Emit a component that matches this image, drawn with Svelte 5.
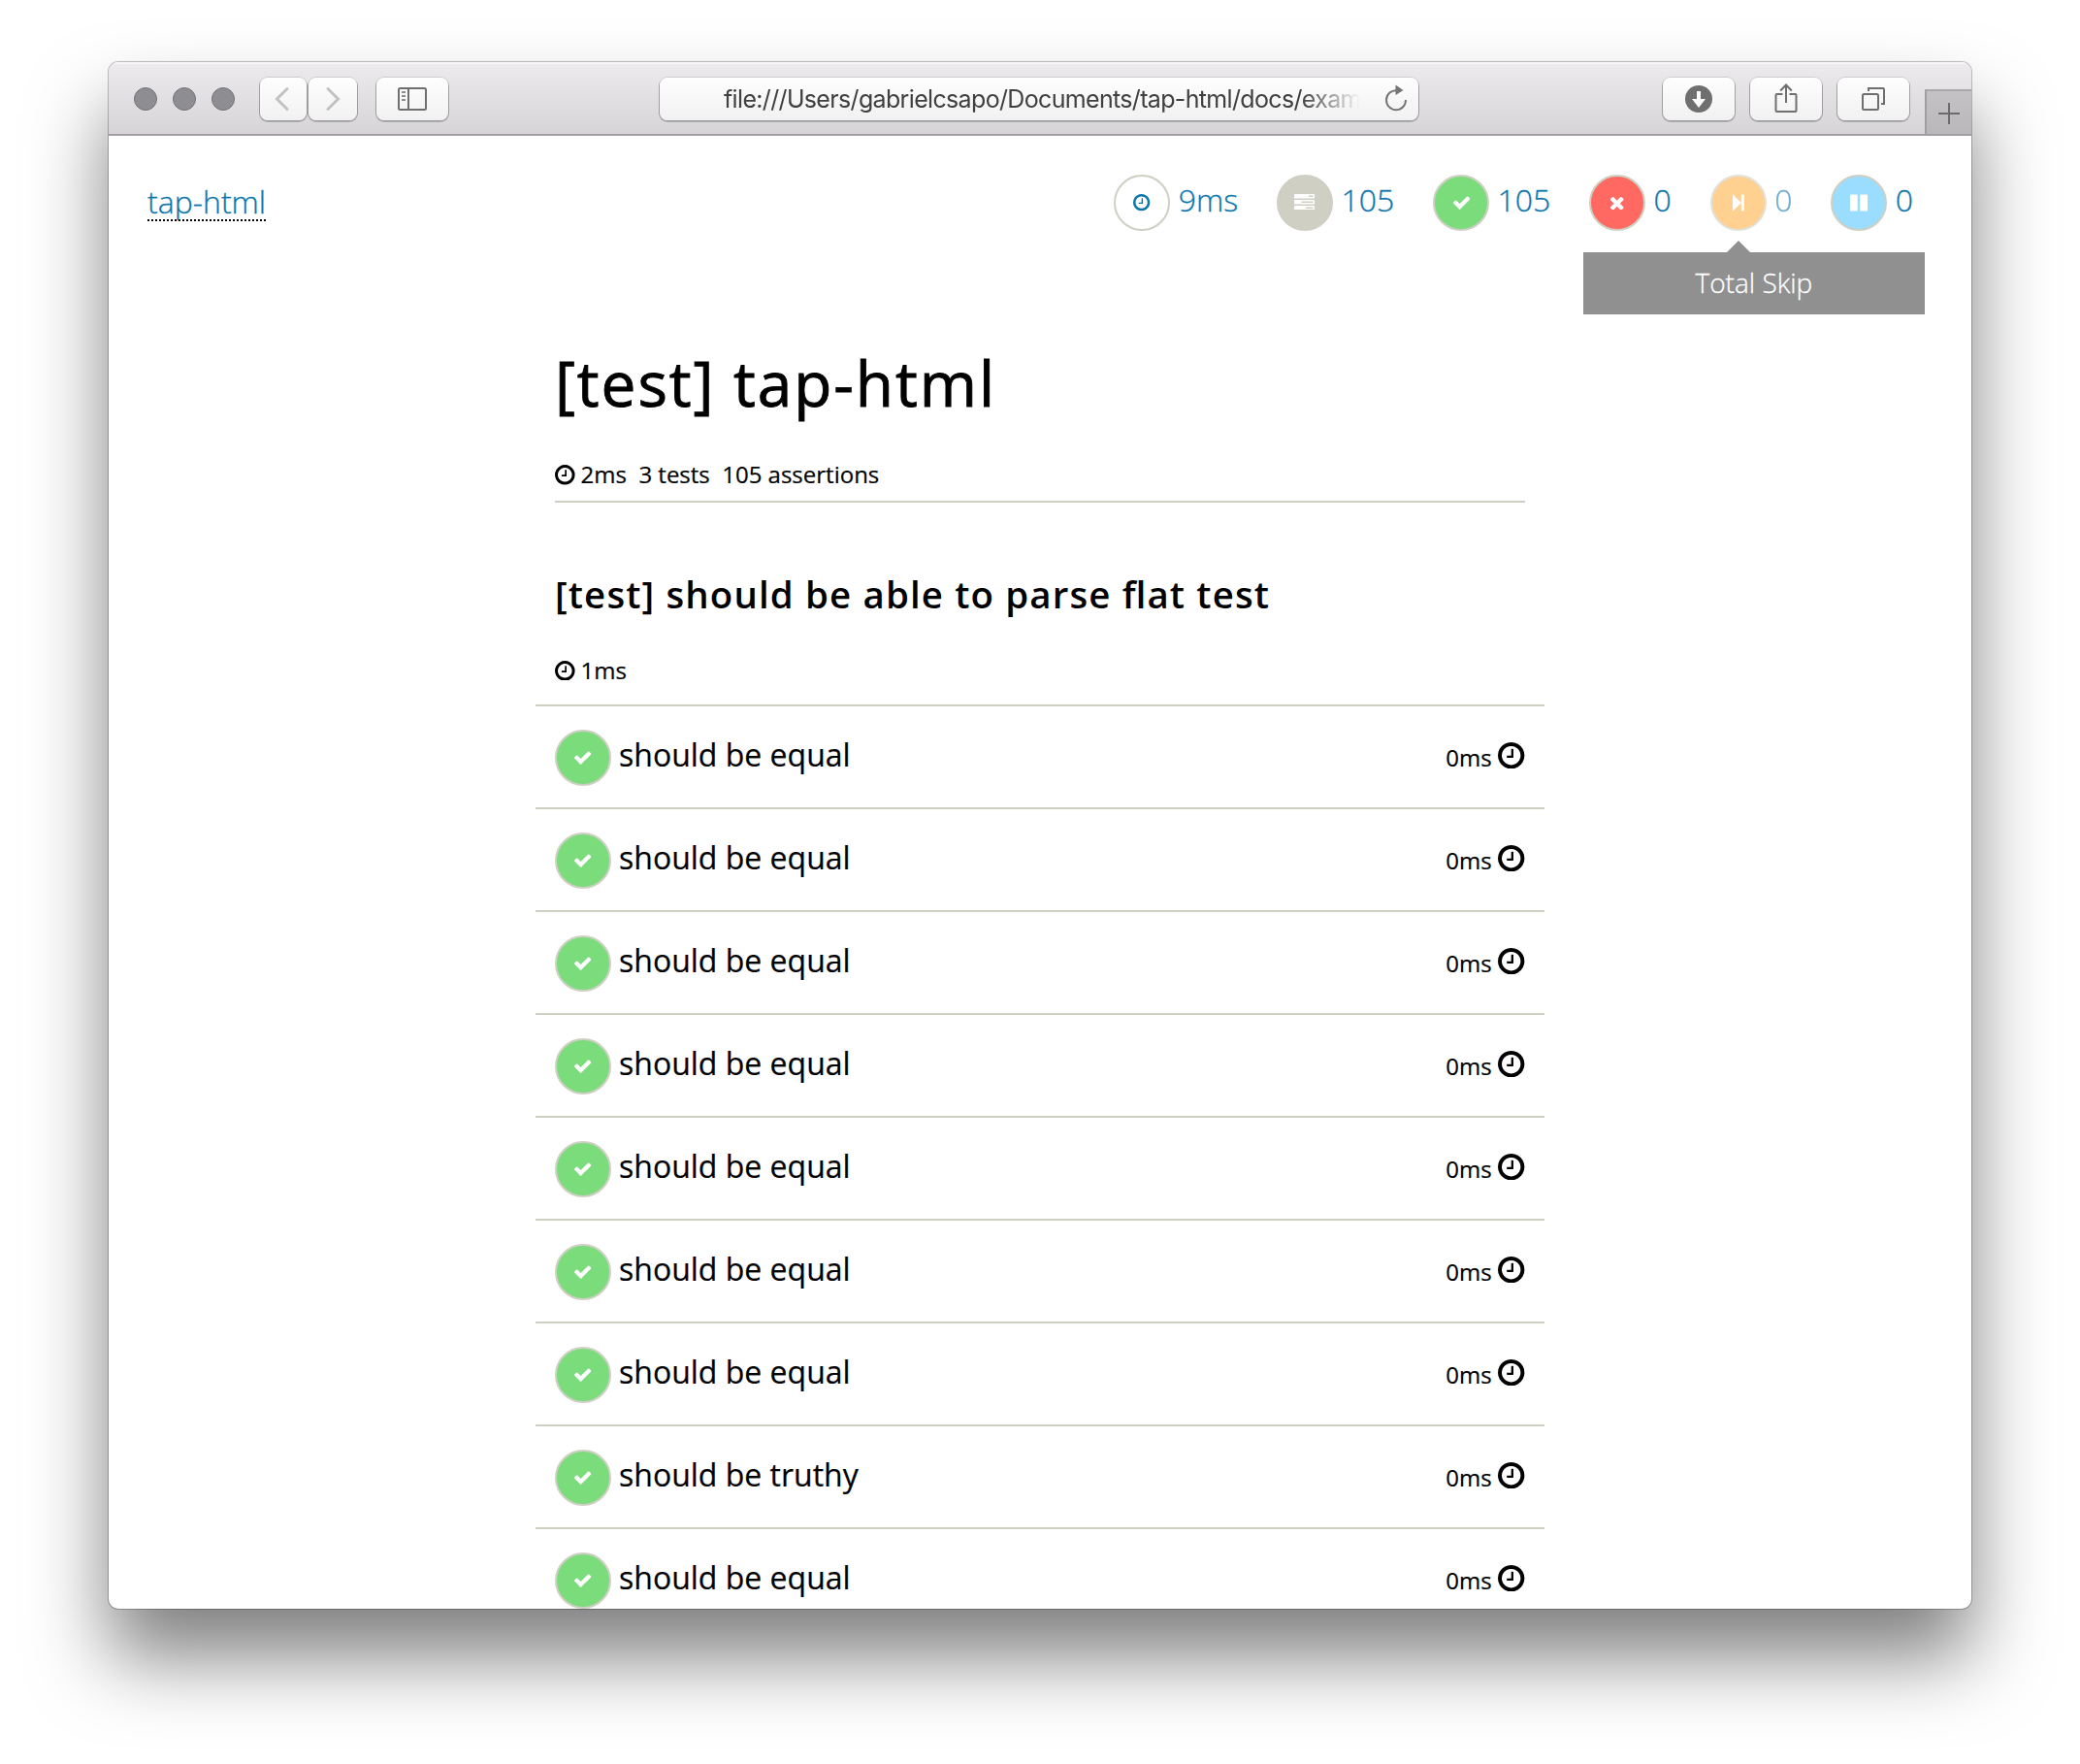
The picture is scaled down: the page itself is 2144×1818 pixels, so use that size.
<script>
  const assertions = [
    'should be equal',
    'should be equal',
    'should be equal',
    'should be equal',
    'should be equal',
    'should be equal',
    'should be equal',
    'should be truthy',
    'should be equal'
  ];

  const totals = [
    { kind: 'time', label: '9ms' },
    { kind: 'total', label: '105' },
    { kind: 'pass', label: '105' },
    { kind: 'fail', label: '0' },
    { kind: 'skip', label: '0', tip: 'Total Skip' },
    { kind: 'todo', label: '0' }
  ];
</script>

{#snippet clock(cls)}
  <svg class={cls} viewBox="0 128 1536 1536" fill="currentColor">
    <path d="M896 544v448q0 14-9 23t-23 9h-320q-14 0-23-9t-9-23v-64q0-14 9-23t23-9h224v-352q0-14 9-23t23-9h64q14 0 23 9t9 23zm416 352q0-148-73-273t-198-198-273-73-273 73-198 198-73 273 73 273 198 198 273 73 273-73 198-198 73-273zm224 0q0 209-103 385.5t-279.5 279.5-385.5 103-385.5-103-279.5-279.5-103-385.5 103-385.5 279.5-279.5 385.5-103 385.5 103 279.5 279.5 103 385.5z" />
  </svg>
{/snippet}

{#snippet check()}
  <svg class="check" viewBox="121 294 1550 1228" fill="currentColor">
    <path d="M1671 566q0 40-28 68l-724 724-136 136q-28 28-68 28t-68-28l-136-136-362-362q-28-28-28-68t28-68l136-136q28-28 68-28t68 28l294 295 656-657q28-28 68-28t68 28l136 136q28 28 28 68z" />
  </svg>
{/snippet}

<div class="desktop">
  <div class="window">
    <div class="toolbar">
      <div class="lights"><i></i><i></i><i></i></div>
      <div class="nav">
        <span class="btn back"><svg width="16" height="26" viewBox="0 0 16 26"><path d="M13 2.5 2.5 13 13 23.5" /></svg></span>
        <span class="btn fwd"><svg width="16" height="26" viewBox="0 0 16 26"><path d="M3 2.5 13.5 13 3 23.5" /></svg></span>
      </div>
      <span class="btn side">
        <svg width="30" height="24" viewBox="0 0 30 24" fill="none" stroke="#6f6f6f">
          <rect x="1" y="1" width="28" height="22" rx="1.5" stroke-width="2" />
          <path d="M11 1v22" stroke-width="2" />
          <path d="M4 5h4M4 9h4M4 13h4" stroke-width="2" stroke="#8c8c8c" />
        </svg>
      </span>
      <div class="address">
        <span class="url">file:///Users/gabrielcsapo/Documents/tap-html/docs/exam</span>
        <svg class="reload" width="24" height="28" viewBox="0 0 24 28">
          <path d="M12.5 6.2A10 10 0 1 0 22 16" fill="none" stroke="#757575" stroke-width="2" />
          <path d="M11.5 0.5V11L19.5 6Z" fill="#757575" />
        </svg>
      </div>
      <div class="actions">
        <span class="btn">
          <svg width="28" height="28" viewBox="0 0 28 28"><circle cx="14" cy="14" r="14" fill="#6f6f6f" /><path d="M12 6h4v8h5l-7 9-7-9h5z" fill="#fcfcfc" /></svg>
        </span>
        <span class="btn share">
          <svg width="24" height="30" viewBox="0 0 24 30" fill="none" stroke="#6f6f6f" stroke-width="2">
            <path d="M8.5 11H2.5Q1.5 11 1.5 12V28Q1.5 29 2.5 29H21.5Q22.5 29 22.5 28V12Q22.5 11 21.5 11H15.500M12 20V1.500M6.200 7.500 12 1.500 17.800 7.500" />
          </svg>
        </span>
        <span class="btn">
          <svg width="24" height="24" viewBox="0 0 24 24" fill="none" stroke="#6f6f6f" stroke-width="2">
            <rect x="1" y="7" width="16" height="16" rx="1.500" />
            <path d="M7 4V1H22Q23 1 23 2V17H20" />
          </svg>
        </span>
      </div>
      <div class="newtab">
        <svg width="22" height="22" viewBox="0 0 22 22" stroke="#6b6b6b" stroke-width="2"><path d="M11 0v22M0 11h22" /></svg>
      </div>
    </div>

    <div class="page">
      <header>
        <a class="brand" href="#top">tap-html</a>
        <nav>
          {#each totals as t}
            <div class="stat {t.kind}">
              <span class="badge {t.kind}">
                {#if t.kind === 'time'}
                  {@render clock('tiny')}
                {:else if t.kind === 'total'}
                  <svg width="21" height="16.5" viewBox="0 128 1792 1408" fill="currentColor">
                    <path d="M1024 1408h640v-128h-640v128zm-384-512h1024v-128h-1024v128zm640-512h384v-128h-384v128zm512 832v256q0 26-19 45t-45 19h-1664q-26 0-45-19t-19-45v-256q0-26 19-45t45-19h1664q26 0 45 19t19 45zm0-512v256q0 26-19 45t-45 19h-1664q-26 0-45-19t-19-45v-256q0-26 19-45t45-19h1664q26 0 45 19t19 45zm0-512v256q0 26-19 45t-45 19h-1664q-26 0-45-19t-19-45v-256q0-26 19-45t45-19h1664q26 0 45 19t19 45z" />
                  </svg>
                {:else if t.kind === 'pass'}
                  {@render check()}
                {:else if t.kind === 'fail'}
                  <svg class="cross" width="13.500" height="13.500" viewBox="302 366 1188 1188" fill="currentColor">
                    <path d="M1490 1322q0 40-28 68l-136 136q-28 28-68 28t-68-28l-294-294-294 294q-28 28-68 28t-68-28l-136-136q-28-28-28-68t28-68l294-294-294-294q-28-28-28-68t28-68l136-136q28-28 68-28t68 28l294 294 294-294q28-28 68-28t68 28l136 136q28 28 28 68t-28 68l-294 294 294 294q28 28 28 68z" />
                  </svg>
                {:else if t.kind === 'skip'}
                  <svg width="12" height="18" viewBox="0 0 12 18" fill="currentColor"><path d="M0 .3 8.800 9V1Q8.800.4 9.400.4H11Q11.700.4 11.700 1V17Q11.700 17.600 11 17.600H9.400Q8.800 17.600 8.800 17V9L0 17.700Z" /></svg>
                {:else}
                  <svg width="18" height="18" viewBox="0 0 18 18" fill="currentColor"><rect x="0" y=".4" width="7.700" height="17.200" rx=".7" /><rect x="10.300" y=".4" width="7.700" height="17.200" rx=".7" /></svg>
                {/if}
              </span>
              <span class="num">{t.label}</span>
              {#if t.tip}<div class="tip">{t.tip}</div>{/if}
            </div>
          {/each}
        </nav>
      </header>

      <main>
        <h1>[test] tap-html</h1>
        <div class="meta ruled">{@render clock('small')}<span>2ms</span><span>3 tests</span><span>105 assertions</span></div>
        <h2>[test] should be able to parse flat test</h2>
        <div class="meta">{@render clock('small')}<span>1ms</span></div>
        <ul>
          {#each assertions as name}
            <li>
              <span class="badge pass">{@render check()}</span>
              <span class="name">{name}</span>
              <span class="took">0ms</span>
              {@render clock('large')}
            </li>
          {/each}
        </ul>
      </main>
    </div>
  </div>
</div>

<style>
  :global(body) {
    background: #fff;
  }
  .desktop {
    box-sizing: border-box;
    width: 2144px;
    height: 1818px;
    padding: 64px 112px 160px;
    overflow: hidden;
    font-family: 'Open Sans', 'Noto Sans', sans-serif;
    color: #000;
  }
  .window {
    width: 1920px;
    height: 1594px;
    border-radius: 10px;
    background: #fff;
    box-shadow:
      0 0 0 1px rgba(0, 0, 0, 0.24),
      0 50px 80px rgba(0, 0, 0, 0.5);
    display: flex;
    flex-direction: column;
    overflow: hidden;
  }
  svg {
    display: block;
    flex: none;
  }

  .toolbar {
    box-sizing: border-box;
    flex: none;
    height: 76px;
    border-bottom: 2px solid #a19fa3;
    background: linear-gradient(#edebee, #d6d4d7);
    box-shadow: inset 0 2px 0 #f6f5f6;
    display: flex;
    padding-left: 26px;
  }
  .lights {
    display: flex;
    gap: 16px;
    align-items: center;
    height: 76px;
    width: 130px;
  }
  .lights i {
    box-sizing: border-box;
    width: 24px;
    height: 24px;
    border-radius: 50%;
    background: #8e8d91;
    border: 1px solid #737276;
  }
  .btn {
    box-sizing: border-box;
    width: 74px;
    height: 44px;
    border-radius: 8px;
    background: linear-gradient(#fefefe, #f1f1f1);
    box-shadow:
      0 0 0 1px rgba(0, 0, 0, 0.11),
      0 1px 0 1px rgba(0, 0, 0, 0.2);
    display: flex;
    align-items: center;
    justify-content: center;
  }
  .nav {
    display: flex;
    gap: 2px;
    margin: 16px 20px 0 0;
  }
  .back {
    width: 48px;
    padding-right: 2px;
  }
  .fwd {
    width: 50px;
  }
  .nav path {
    fill: none;
    stroke: #c2c2c2;
    stroke-width: 3;
    stroke-linecap: round;
  }
  .side {
    margin-top: 16px;
  }
  .address {
    display: flex;
    align-items: center;
    width: 782px;
    height: 44px;
    box-sizing: border-box;
    margin: 16px 0 0 218px;
    padding-left: 66px;
    border-radius: 8px;
    background: linear-gradient(#fefefe, #f1f1f1);
    box-shadow:
      0 0 0 1px rgba(0, 0, 0, 0.11),
      0 1px 0 1px rgba(0, 0, 0, 0.2);
  }
  .url {
    width: 658px;
    flex: none;
    overflow: hidden;
    white-space: nowrap;
    font: 25px/48px Inter, 'Liberation Sans', sans-serif;
    letter-spacing: -0.660px;
    color: #404040;
    -webkit-mask-image: linear-gradient(90deg, #000 595px, transparent 656px);
    mask-image: linear-gradient(90deg, #000 595px, transparent 656px);
  }
  .reload {
    margin: 0 0 2px 23px;
  }
  .actions {
    display: flex;
    gap: 16px;
    margin: 16px 16px 0 252px;
  }
  .share svg {
    margin-bottom: 2px;
  }
  .newtab {
    box-sizing: border-box;
    flex: 1;
    height: 46px;
    margin-top: 28px;
    border-left: 2px solid #a09ea2;
    border-top: 2px solid #a9a7aa;
    background: linear-gradient(#c4c2c5, #b9b7ba);
    display: flex;
    align-items: center;
    justify-content: center;
    padding-top: 2px;
  }

  .page {
    flex: 1;
    min-height: 0;
    overflow: hidden;
  }
  header {
    display: flex;
    justify-content: space-between;
    padding: 40px 40px 0;
    font-size: 32px;
    font-weight: 300;
    line-height: 58px;
    height: 58px;
    -webkit-text-stroke: 0.3px;
  }
  .brand {
    color: #0b76ac;
    text-decoration: none;
    border-bottom: 2px dotted #000;
    line-height: 36px;
    height: 36px;
    margin-top: 10px;
  }
  nav {
    display: flex;
  }
  .stat {
    position: relative;
    display: flex;
    gap: 8.300px;
    padding: 0 20px;
    color: #0b76ac;
  }
  .num {
    line-height: 51px;
  }
  .badge {
    box-sizing: border-box;
    width: 58px;
    height: 58px;
    flex: none;
    border: 2px solid #cfcfc4;
    border-radius: 50%;
    display: flex;
    align-items: center;
    justify-content: center;
    color: #fff;
  }
  .badge.time {
    color: #0b76ac;
  }
  .badge.total {
    background: #cfcfc4;
  }
  .badge.total svg {
    margin: -2px 1px 0 0;
  }
  .badge.pass {
    background: #7adc7b;
  }
  .badge.fail {
    background: #ff6961;
  }
  .badge.skip {
    background: #ffb347;
  }
  .badge.todo {
    background: #9bddff;
  }
  .stat.skip .badge,
  .stat.skip .num {
    opacity: 0.6;
  }
  .tip {
    position: absolute;
    left: -111px;
    top: 80px;
    width: 352px;
    height: 64px;
    background: #909090;
    color: #fff;
    font-size: 28px;
    line-height: 63px;
    text-align: center;
  }
  .tip::before {
    content: '';
    position: absolute;
    left: 148px;
    top: -12px;
    border: 12px solid transparent;
    border-top: 0;
    border-bottom-color: #909090;
  }
  .tiny {
    width: 17.300px;
    height: 17.300px;
    margin-right: 0.700px;
  }
  .small {
    width: 20.600px;
    height: 20.600px;
  }
  .large {
    width: 27.400px;
    height: 27.400px;
    margin: 0 0.300px 3px 6.700px;
  }
  .check {
    width: 17.300px;
    height: 13.700px;
  }
  .cross {
    margin: 1px 1px 0 0;
  }

  main {
    width: 1000px;
    margin: 0 auto;
    -webkit-text-stroke: 0.2px;
  }
  h1 {
    margin: 0;
    padding: 110px 0 2px;
    font-size: 64px;
    line-height: 94px;
    font-weight: 400;
    letter-spacing: 0.030em;
    -webkit-text-stroke: 0.9px;
  }
  .meta {
    box-sizing: border-box;
    display: flex;
    align-items: center;
    font-size: 24px;
    line-height: 36px;
    height: 36px;
  }
  .meta span {
    margin-left: 12.400px;
  }
  .meta svg + span {
    margin-left: 6px;
  }
  .ruled {
    height: 74px;
    padding-top: 27px;
    border-bottom: 2px solid #cfcfc4;
    align-items: flex-start;
  }
  .ruled svg {
    margin-top: 8px;
  }
  h2 {
    margin: 66px 0 0;
    font-size: 38.400px;
    line-height: 56px;
    font-weight: 600;
    letter-spacing: 0.030em;
    font-feature-settings: 'liga' 1;
    -webkit-text-stroke: 0;
    height: 71px;
  }
  h2 + .meta {
    margin-top: 18px;
  }
  ul {
    list-style: none;
    margin: 17px -20px 0;
    padding: 0;
  }
  li {
    box-sizing: border-box;
    height: 106px;
    border-top: 2px solid #cfcfc4;
    padding: 0 20px;
    display: flex;
    align-items: center;
    font-size: 32px;
  }
  li .badge {
    margin-top: 2px;
  }
  .name {
    margin: 0 auto 6px 8px;
  }
  .took {
    font-size: 24px;
  }
</style>
